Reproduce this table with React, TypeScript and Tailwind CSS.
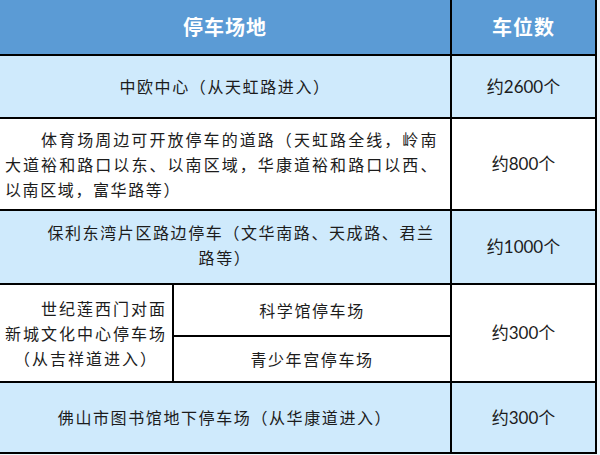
const cjk = { fontFamily: '"Noto Sans CJK SC", "Noto Sans", sans-serif' };

export default function App() {
  const light = "bg-[#cfeafc]";
  const num = "flex items-center justify-center text-[17px] text-[#1c1c1c] font-['Lato','Noto_Sans_CJK_SC',sans-serif]";
  const cell = "flex items-center justify-center text-[16px] tracking-[1.6px] text-[#1c1c1c] leading-[25px]";

  return (
    <div className="w-[600px] h-[455px] bg-[#eef6fc]" style={cjk}>
      <div className="w-[597px] bg-black pr-[2px] pb-[2px] grid grid-cols-[172px_276px_143px] grid-rows-[54px_61px_90px_72px_50px_44px_69px] gap-[2px]">
        {/* header */}
        <div className="col-span-2 bg-[#5b9bd5] flex items-center justify-center text-white font-bold text-[20px] tracking-[1px]">
          停车场地
        </div>
        <div className="bg-[#5b9bd5] flex items-center justify-center text-white font-bold text-[20px] tracking-[1px]">
          车位数
        </div>

        {/* row 1 */}
        <div className={`col-span-2 ${light} ${cell}`}>中欧中心（从天虹路进入）</div>
        <div className={`${light} ${num}`}>约2600个</div>

        {/* row 2 */}
        <div className={`col-span-2 bg-white ${cell} flex-col items-stretch px-[5px] pr-[12px]`}>
          <div className="pl-[36px] text-justify [text-align-last:justify]">体育场周边可开放停车的道路（天虹路全线，岭南</div>
          <div className="text-justify [text-align-last:justify]">大道裕和路口以东、以南区域，华康道裕和路口以西、</div>
          <div className="text-left">以南区域，富华路等）</div>
        </div>
        <div className={`bg-white ${num}`}>约800个</div>

        {/* row 3 */}
        <div className={`col-span-2 ${light} ${cell} flex-col pb-[4px] leading-[24px]`}>
          <div className="pl-[32px]">保利东湾片区路边停车（文华南路、天成路、君兰</div>
          <div>路等）</div>
        </div>
        <div className={`${light} ${num}`}>约1000个</div>

        {/* row 4 */}
        <div className={`row-span-2 bg-white ${cell} flex-col text-center tracking-[2px]`}>
          <div className="pl-[36px]">世纪莲西门对面</div>
          <div>新城文化中心停车场</div>
          <div>（从吉祥道进入）</div>
        </div>
        <div className={`bg-white ${cell}`}>科学馆停车场</div>
        <div className={`row-span-2 bg-white ${num}`}>约300个</div>
        <div className={`bg-white ${cell}`}>青少年宫停车场</div>

        {/* row 5 */}
        <div className={`col-span-2 ${light} ${cell}`}>佛山市图书馆地下停车场（从华康道进入）</div>
        <div className={`${light} ${num}`}>约300个</div>
      </div>
    </div>
  );
}
